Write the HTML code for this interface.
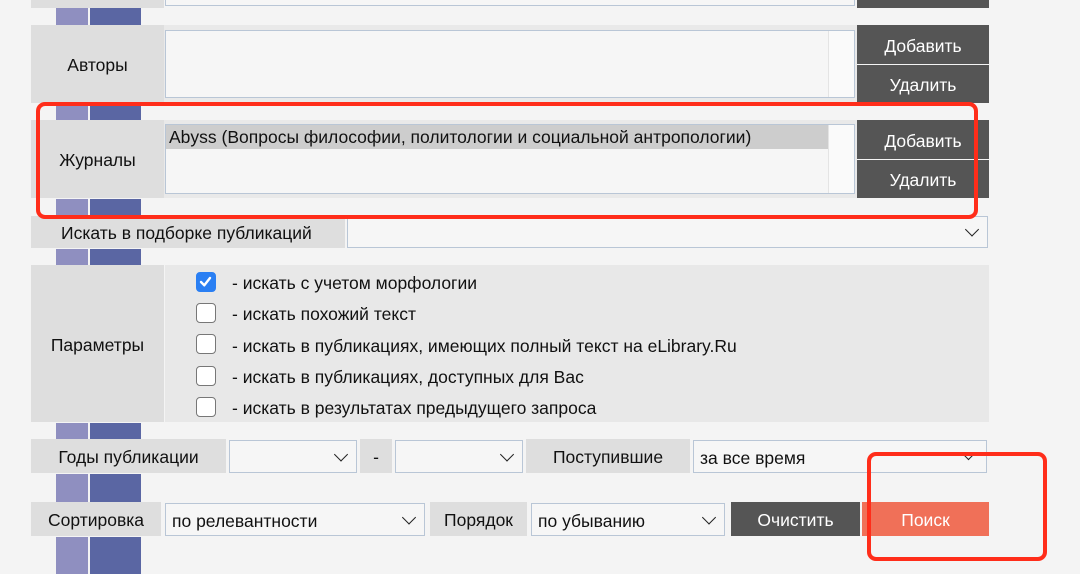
<!DOCTYPE html>
<html><head><meta charset="utf-8"><style>
*{margin:0;padding:0;box-sizing:border-box}
body{width:1080px;height:574px;background:#f4f4f4;position:relative;overflow:hidden;font-family:"Liberation Sans","DejaVu Sans",sans-serif;font-size:17.5px;color:#111}
div{position:absolute}
.l{background:#dedede;display:flex;align-items:center;justify-content:center;padding-top:3px}
.b1{background:#8f8fc0;left:56px;width:32px}
.b2{background:#5a66a3;left:90px;width:51px}
.ta{background:#f6f6f6;border:1px solid #b9c6d6}
.btn{background:#555;color:#fff;display:flex;align-items:center;justify-content:center;font-size:17.5px;padding-top:3px}
.sel{background:#f6f6f6;border:1px solid #b9c6d6;display:flex;align-items:center;padding-left:6px;padding-top:3px}
.chev{position:absolute;right:10px;top:50%;width:10px;height:10px;border-right:1.8px solid #222;border-bottom:1.8px solid #222;transform:translateY(-75%) rotate(45deg)}
.cb{left:196px;width:20px;height:20px;border:1.5px solid #777;border-radius:4px;background:#fff}
.ct{left:232px;font-size:17.5px}
.red{border:4px solid #ff2d1a;border-radius:9px}
</style></head><body>
<div class="l" style="left:31px;top:0;width:133px;height:8px"></div>
<div class="ta" style="left:165px;top:-4px;width:690px;height:10px"></div>
<div class="btn" style="left:857px;top:0;width:132px;height:8px"></div>
<div class="b1" style="top:8px;height:17px"></div><div class="b2" style="top:8px;height:17px"></div>

<div class="l" style="left:31px;top:25px;width:133px;height:78px">Авторы</div>
<div style="left:164px;top:25px;width:693px;height:78px;background:#e9e9e9"></div>
<div class="ta" style="left:165px;top:30px;width:690px;height:68px"><div style="right:0;top:0;width:26px;height:100%;background:#fafafa;border-left:1px solid #e4e4e4"></div></div>
<div class="btn" style="left:857px;top:25px;width:132px;height:39px">Добавить</div>
<div class="btn" style="left:857px;top:65px;width:132px;height:38px">Удалить</div>
<div class="b1" style="top:106px;height:14px"></div><div class="b2" style="top:106px;height:14px"></div>

<div class="l" style="left:31px;top:120px;width:133px;height:78px">Журналы</div>
<div style="left:164px;top:120px;width:693px;height:78px;background:#e9e9e9"></div>
<div class="ta" style="left:165px;top:124px;width:690px;height:70px"><div style="right:0;top:0;width:26px;height:100%;background:#fafafa;border-left:1px solid #e4e4e4"></div>
<div style="left:0;top:0;width:662px;height:24px;background:#cdcdcd;padding-left:3px;line-height:24px">Abyss (Вопросы философии, политологии и социальной антропологии)</div></div>
<div class="btn" style="left:857px;top:120px;width:132px;height:39px">Добавить</div>
<div class="btn" style="left:857px;top:160px;width:132px;height:38px">Удалить</div>
<div class="b1" style="top:199px;height:17px"></div><div class="b2" style="top:199px;height:17px"></div>

<div class="l" style="left:31px;top:216px;width:314px;height:32px;justify-content:flex-start;padding-left:30px">Искать в подборке публикаций</div>
<div class="sel" style="left:347px;top:216px;width:641px;height:32px"><span class="chev"></span></div>
<div class="b1" style="top:249px;height:16px"></div><div class="b2" style="top:249px;height:16px"></div>

<div class="l" style="left:31px;top:265px;width:133px;height:157px">Параметры</div>
<div style="left:165px;top:265px;width:824px;height:157px;background:#e8e8e8"></div>
<div class="cb" style="top:272px;background:#2a7ff3;border-color:#2a7ff3"><svg width="17" height="17" viewBox="0 0 17 17" style="position:absolute;left:0;top:0"><path d="M4 9 L7.3 12.3 L13 5" stroke="#fff" stroke-width="2.4" fill="none" stroke-linecap="round" stroke-linejoin="round"/></svg></div>
<div class="ct" style="top:273px">- искать с учетом морфологии</div>
<div class="cb" style="top:303px"></div><div class="ct" style="top:304px">- искать похожий текст</div>
<div class="cb" style="top:334px"></div><div class="ct" style="top:336px">- искать в публикациях, имеющих полный текст на eLibrary.Ru</div>
<div class="cb" style="top:366px"></div><div class="ct" style="top:367px">- искать в публикациях, доступных для Вас</div>
<div class="cb" style="top:397px"></div><div class="ct" style="top:398px">- искать в результатах предыдущего запроса</div>
<div class="b1" style="top:423px;height:16px"></div><div class="b2" style="top:423px;height:16px"></div>

<div class="l" style="left:31px;top:439px;width:195px;height:34px">Годы публикации</div>
<div class="sel" style="left:229px;top:440px;width:128px;height:33px"><span class="chev"></span></div>
<div class="l" style="left:360px;top:439px;width:32px;height:34px">-</div>
<div class="sel" style="left:395px;top:440px;width:128px;height:33px"><span class="chev"></span></div>
<div class="l" style="left:526px;top:439px;width:164px;height:34px">Поступившие</div>
<div class="sel" style="left:693px;top:440px;width:294px;height:33px">за все время<span class="chev" style="width:7px;height:7px;right:14px"></span></div>
<div class="b1" style="top:474px;height:28px"></div><div class="b2" style="top:474px;height:28px"></div>

<div class="l" style="left:31px;top:502px;width:130px;height:34px">Сортировка</div>
<div class="sel" style="left:165px;top:503px;width:260px;height:33px">по релевантности<span class="chev"></span></div>
<div class="l" style="left:430px;top:502px;width:97px;height:34px">Порядок</div>
<div class="sel" style="left:531px;top:503px;width:194px;height:33px">по убыванию<span class="chev"></span></div>
<div class="btn" style="left:731px;top:502px;width:129px;height:34px">Очистить</div>
<div class="btn" style="left:862px;top:502px;width:127px;height:34px;background:#f07058">Поиск</div>
<div class="b1" style="top:537px;height:37px"></div><div class="b2" style="top:537px;height:37px"></div>

<div class="red" style="left:36px;top:102px;width:942px;height:117px"></div>
<div class="red" style="left:867px;top:452px;width:180px;height:109px"></div>
</body></html>
